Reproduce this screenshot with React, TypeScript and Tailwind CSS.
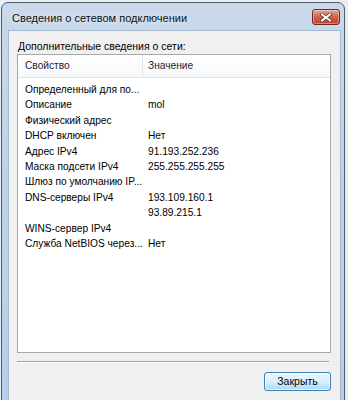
import React from 'react';

const rows: [string, string][] = [
  ['Определенный для по...', ''],
  ['Описание', 'mol'],
  ['Физический адрес', ''],
  ['DHCP включен', 'Нет'],
  ['Адрес IPv4', '91.193.252.236'],
  ['Маска подсети IPv4', '255.255.255.255'],
  ['Шлюз по умолчанию IP...', ''],
  ['DNS-серверы IPv4', '193.109.160.1'],
  ['', '93.89.215.1'],
  ['WINS-сервер IPv4', ''],
  ['Служба NetBIOS через...', 'Нет'],
];

const CloseButton: React.FC = () => (
  <div className="w-[28px] h-[16px] rounded-[3px] border border-[#6e2a20] bg-gradient-to-b from-[#e9a597] via-[#d0604c] to-[#c2412b] flex items-center justify-center shadow-[inset_0_0_0_1px_rgba(255,255,255,0.35)]">
    <svg width="12" height="9" viewBox="0 0 12 9">
      <path d="M2 1.5 L10 7.5 M10 1.5 L2 7.5" stroke="#5a2a24" strokeWidth="3.4" strokeLinecap="square" />
      <path d="M2 1.5 L10 7.5 M10 1.5 L2 7.5" stroke="#ffffff" strokeWidth="2" strokeLinecap="square" />
    </svg>
  </div>
);

export default function App() {
  return (
    <div
      className="w-[348px] h-[400px] overflow-hidden bg-[#e9eef3] pt-[2px] pl-[1px] text-[10.2px] text-black"
      style={{ fontFamily: '"Liberation Sans", Arial, sans-serif' }}
    >
      <div className="w-[344px] h-[420px] rounded-t-[7px] border border-[#4d5b6b] bg-gradient-to-b from-[#c9d9ea] via-[#bcd2e9] to-[#b6cfea] flex flex-col">
        {/* Title bar */}
        <div className="h-[27px] flex items-center justify-between pl-[10px] pr-[4px] pt-[4px]">
          <span className="text-[11px] text-[#111] [text-shadow:0_0_6px_rgba(255,255,255,0.9)]">
            Сведения о сетевом подключении
          </span>
          <div className="mt-[-3px]">
            <CloseButton />
          </div>
        </div>

        {/* Client area */}
        <div className="flex-1 ml-[6px] mr-[3px] bg-[#f0f0f0] border-l border-t border-r border-[#a3b8cf] pl-[8px] pr-[9px] pt-[8px] flex flex-col">
          <div className="h-[14px] leading-[14px] pl-[1px] text-[10.5px]">Дополнительные сведения о сети:</div>

          {/* List view */}
          <div className="mt-[1px] h-[299px] border border-[#a9a9a9] bg-white flex flex-col">
            <div className="h-[23px] flex border-b border-[#e2e5ea] bg-gradient-to-b from-white to-[#f7f8fa]">
              <div className="w-[125px] border-r border-[#e2e5ea] pl-[7px] flex items-center text-[#1c2733]">
                Свойство
              </div>
              <div className="flex-1 pl-[5px] flex items-center text-[#1c2733]">Значение</div>
            </div>
            <div className="pt-[4px] flex flex-col">
              {rows.map(([k, v], i) => (
                <div key={i} className="h-[15.4px] flex items-center">
                  <div className="w-[125px] pl-[7px] whitespace-nowrap overflow-hidden">{k}</div>
                  <div className="flex-1 pl-[5px] whitespace-nowrap">{v}</div>
                </div>
              ))}
            </div>
          </div>

          {/* Separator */}
          <div className="mt-[8px] mr-[2px] h-[2px] border-t border-[#a0a0a0] border-b border-b-white" />

          {/* Buttons */}
          <div className="mt-[9px] flex justify-end">
            <button className="w-[67px] h-[19px] rounded-[3px] border border-[#3c7fb1] bg-gradient-to-b from-[#eaf6fd] via-[#d9f0fc] to-[#a7d9f5] shadow-[inset_0_0_0_1px_rgba(255,255,255,0.7)] flex items-center justify-center text-[10.5px] text-black">
              Закрыть
            </button>
          </div>
        </div>
      </div>
    </div>
  );
}
